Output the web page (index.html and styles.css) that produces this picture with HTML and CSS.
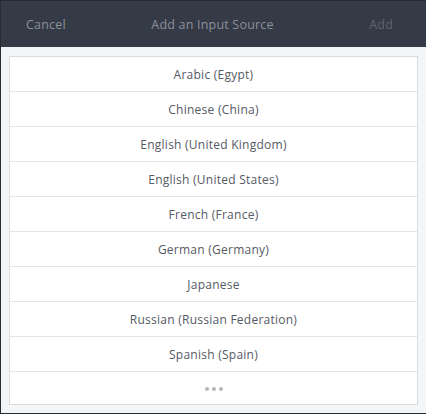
FILE: index.html
```html
<!DOCTYPE html>
<html>
<head>
<meta charset="utf-8">
<link rel="stylesheet" href="styles.css">
</head>
<body>
<div class="dialog">
  <header class="bar">
    <span class="btn cancel">Cancel</span>
    <span class="title">Add an Input Source</span>
    <span class="btn add">Add</span>
  </header>
  <main class="content">
    <ul class="list">
      <li class="row">Arabic (Egypt)</li>
      <li class="row">Chinese (China)</li>
      <li class="row">English (United Kingdom)</li>
      <li class="row">English (United States)</li>
      <li class="row">French (France)</li>
      <li class="row">German (Germany)</li>
      <li class="row">Japanese</li>
      <li class="row">Russian (Russian Federation)</li>
      <li class="row">Spanish (Spain)</li>
      <li class="row more"><span class="dot"></span><span class="dot"></span><span class="dot"></span></li>
    </ul>
  </main>
</div>
</body>
</html>
```
FILE: styles.css
```css
html, body {
  margin: 0;
  padding: 0;
  background: #262a32;
}
body {
  width: 426px;
  height: 414px;
  font-family: "Open Sans", "Noto Sans", sans-serif;
}
.dialog {
  margin-top: 1px;
  margin-left: 1px;
  height: 412px;
  display: flex;
  flex-direction: column;
}
.bar {
  height: 46px;
  background: #343a46;
  display: grid;
  grid-template-columns: 1fr auto 1fr;
  align-items: center;
  padding: 0 33px 0 25px;
  font-size: 12.5px;
  letter-spacing: 0.2px;
  color: #8b919b;
}
.bar .title {
  position: relative;
  left: 3px;
}
.bar .add {
  color: #5f6571;
  justify-self: end;
}
.content {
  flex: 1;
  background: #f4f5f7;
  padding: 9px 8px 0 8px;
}
.list {
  list-style: none;
  margin: 0;
  padding: 0;
  background: #ffffff;
  border: 1px solid #d9dbdf;
}
.row {
  height: 34px;
  border-bottom: 1px solid #e3e5e8;
  display: flex;
  align-items: center;
  justify-content: center;
  font-size: 12px;
  letter-spacing: 0.25px;
  color: #555a64;
}
.row.more {
  height: 32px;
  border-bottom: none;
  gap: 3px;
  padding-top: 1px;
  box-sizing: border-box;
}
.dot {
  width: 4px;
  height: 4px;
  border-radius: 50%;
  background: #b4b7bc;
}
```
